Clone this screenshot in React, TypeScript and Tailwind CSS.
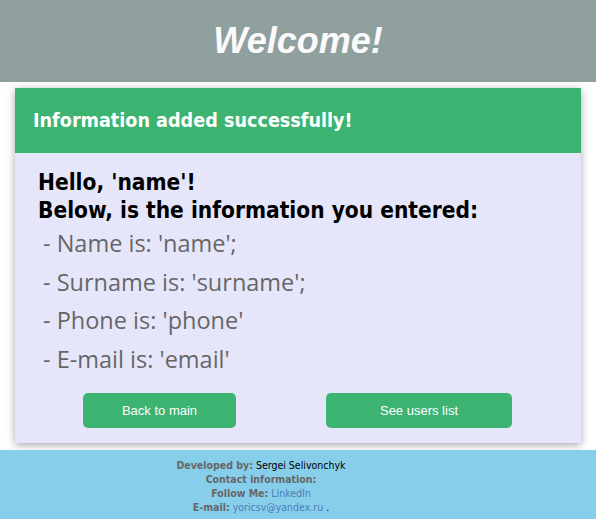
export default function App() {
  const items = ["Name is: 'name';", "Surname is: 'surname';", "Phone is: 'phone'", "E-mail is: 'email'"];

  return (
    <div className="min-h-[519px] flex flex-col bg-white">
      {/* шапка */}
      <header className="h-[82px] bg-[#8fa09e] flex items-center justify-center">
        <h1 className="text-[36px] font-bold italic text-[#fafafa] font-['Liberation_Sans',Arial,sans-serif]">Welcome!</h1>
      </header>

      <main className="px-[15px] pt-[6px] pb-[7px] bg-white">
        <div className="bg-[#e6e6fa] shadow-[0_2px_8px_rgba(0,0,0,0.35)]">
          <div className="h-[65px] bg-[#3cb371] flex items-center px-[18px]">
            <h2 className="text-[19.6px] font-bold text-white font-['DejaVu_Sans_Condensed','DejaVu_Sans',sans-serif]">
              Information added successfully!
            </h2>
          </div>
          <div className="px-[23px] pt-[15px] pb-[15px] font-['DejaVu_Sans_Condensed','DejaVu_Sans',sans-serif]">
            <p className="text-[22.5px] font-bold text-black leading-[28px]">Hello, 'name'!</p>
            <p className="text-[22.5px] font-bold text-black leading-[28px]">Below, is the information you entered:</p>
            <ul className="pl-[5px] font-['Open_Sans','Noto_Sans',sans-serif] text-[23.5px] text-[#666] leading-[38.5px]">
              {items.map((t) => (
                <li key={t}>- {t}</li>
              ))}
            </ul>
            <div className="flex gap-[90px] ml-[45px] mt-[15px]">
              <button className="w-[153px] h-[35px] rounded-[5px] bg-[#3cb371] text-white text-[13px] font-['Liberation_Sans',sans-serif]">
                Back to main
              </button>
              <button className="w-[186px] h-[35px] rounded-[5px] bg-[#3cb371] text-white text-[13px] font-['Liberation_Sans',sans-serif]">
                See users list
              </button>
            </div>
          </div>
        </div>
      </main>

      <footer className="flex-1 bg-[#87ceeb] text-center text-[10.5px] leading-[14px] pt-[8px] pb-[5px] pr-[74px] font-['DejaVu_Sans_Condensed','DejaVu_Sans',sans-serif] text-[#666]">
        <p><b>Developed by:</b> <span className="text-black">Sergei Selivonchyk</span></p>
        <p><b>Contact information:</b></p>
        <p><b>Follow Me:</b> <a className="text-[#4f7bb5]">LinkedIn</a></p>
        <p><b>E-mail:</b> <a className="text-[#4f7bb5]">yoricsv@yandex.ru</a> <span className="text-black">.</span></p>
      </footer>
    </div>
  );
}
